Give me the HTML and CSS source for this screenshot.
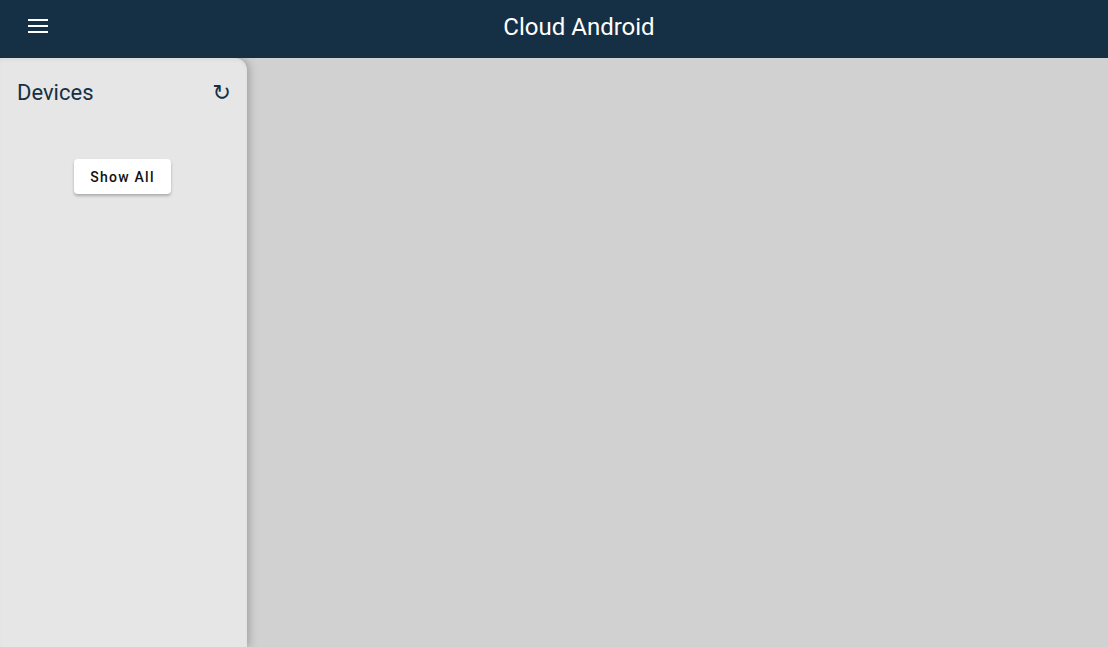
FILE: index.html
```html
<!DOCTYPE html>
<html lang="en">
<head>
<meta charset="utf-8">
<title>Cloud Android</title>
<link rel="stylesheet" href="styles.css">
</head>
<body>
<header class="topbar">
  <button class="menu-btn" aria-label="Menu">
    <svg width="20" height="14" viewBox="0 0 20 14"><rect x="0" y="0" width="20" height="2" fill="#fff"/><rect x="0" y="6" width="20" height="2" fill="#fff"/><rect x="0" y="12" width="20" height="2" fill="#fff"/></svg>
  </button>
  <h1 class="title">Cloud Android</h1>
</header>
<div class="layout">
  <aside class="sidebar">
    <div class="sidebar-head">
      <h2 class="sidebar-title">Devices</h2>
      <span class="refresh">↻</span>
    </div>
    <div class="sidebar-actions">
      <button class="show-all">Show All</button>
    </div>
  </aside>
  <main class="content"></main>
</div>
</body>
</html>
```
FILE: styles.css
```css
* { box-sizing: border-box; }
html, body { margin: 0; height: 100%; }
body {
  font-family: Roboto, "Liberation Sans", sans-serif;
  background: #d1d1d1;
  display: flex;
  flex-direction: column;
  overflow: hidden;
}
.topbar {
  height: 58px;
  flex: 0 0 58px;
  background: #152f44;
  display: flex;
  align-items: center;
  position: relative;
  z-index: 2;
}
.menu-btn {
  background: none;
  border: 0;
  padding: 0;
  margin-left: 28px;
  width: 20px;
  height: 14px;
  display: flex;
  margin-top: -6px;
}
.title {
  flex: 1;
  margin: 0 0 4px 0;
  text-align: center;
  color: #fff;
  font-weight: 400;
  font-size: 24px;
  padding-left: 2px;
}
.layout {
  flex: 1;
  display: flex;
}
.sidebar {
  width: 247px;
  background: #e6e6e6;
  border-top-right-radius: 12px;
  box-shadow: 2px 0 8px rgba(0,0,0,0.25), inset 0 3px 4px -2px rgba(0,0,0,0.08);
  position: relative;
  z-index: 1;
}
.sidebar-head {
  display: flex;
  justify-content: space-between;
  align-items: center;
  padding: 21px 16px 0 17px;
}
.sidebar-title {
  margin: 0;
  font-weight: 400;
  font-size: 22px;
  color: #152f44;
  line-height: 28px;
}
.refresh {
  font-family: "DejaVu Sans", sans-serif;
  font-size: 22px;
  color: #152f44;
  line-height: 28px;
}
.sidebar-actions {
  display: flex;
  justify-content: center;
  padding-top: 52px;
  padding-right: 2px;
}
.show-all {
  background: #fff;
  border: 0;
  border-radius: 4px;
  width: 97px;
  height: 35px;
  font-family: Roboto, "Liberation Sans", sans-serif;
  font-weight: 500;
  font-size: 14px;
  letter-spacing: 1.25px;
  color: #111;
  box-shadow: 0 2px 3px rgba(0,0,0,0.25);
}
.content { flex: 1; }
```
